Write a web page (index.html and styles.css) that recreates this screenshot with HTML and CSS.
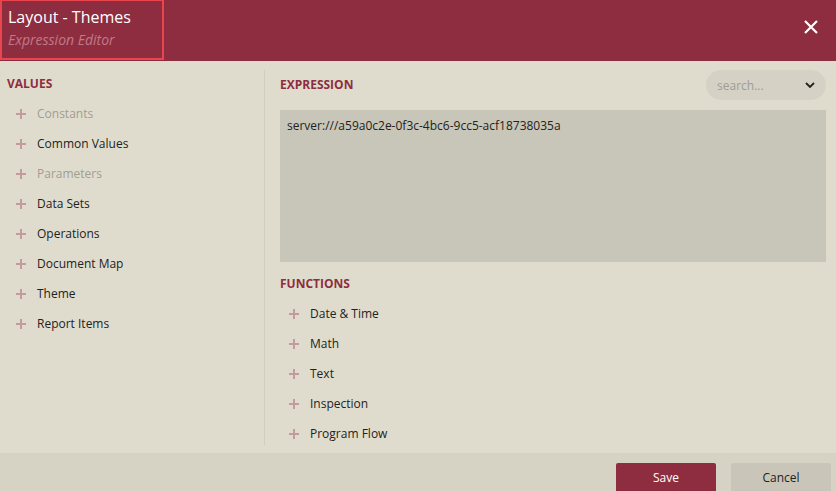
FILE: index.html
```html
<!DOCTYPE html>
<html lang="en">
<head>
    <meta charset="UTF-8">
    <title>Expression Editor</title>
    <link rel="stylesheet" href="styles.css">
</head>
<body>
    <div class="dialog">
        <div class="header">
            <div class="title-box">
                <div class="title">Layout - Themes</div>
                <div class="subtitle">Expression Editor</div>
            </div>
            <button class="close" aria-label="Close">
                <svg width="16" height="16" viewBox="0 0 16 16"><path d="M2 2 L14 14 M14 2 L2 14" stroke="#fff" stroke-width="2.2" fill="none"/></svg>
            </button>
        </div>
        <div class="content">
            <div class="sidebar">
                <h2>VALUES</h2>
                <ul class="tree">
                    <li class="disabled"><svg class="plus" viewBox="0 0 10 10"><path d="M5 0 V10 M0 5 H10"/></svg>Constants</li>
                    <li><svg class="plus" viewBox="0 0 10 10"><path d="M5 0 V10 M0 5 H10"/></svg>Common Values</li>
                    <li class="disabled"><svg class="plus" viewBox="0 0 10 10"><path d="M5 0 V10 M0 5 H10"/></svg>Parameters</li>
                    <li><svg class="plus" viewBox="0 0 10 10"><path d="M5 0 V10 M0 5 H10"/></svg>Data Sets</li>
                    <li><svg class="plus" viewBox="0 0 10 10"><path d="M5 0 V10 M0 5 H10"/></svg>Operations</li>
                    <li><svg class="plus" viewBox="0 0 10 10"><path d="M5 0 V10 M0 5 H10"/></svg>Document Map</li>
                    <li><svg class="plus" viewBox="0 0 10 10"><path d="M5 0 V10 M0 5 H10"/></svg>Theme</li>
                    <li><svg class="plus" viewBox="0 0 10 10"><path d="M5 0 V10 M0 5 H10"/></svg>Report Items</li>
                </ul>
            </div>
            <div class="main">
                <div class="main-head">
                    <h2>EXPRESSION</h2>
                    <div class="search">
                        <span class="placeholder">search...</span>
                        <svg width="10" height="6" viewBox="0 0 10 6"><path d="M1 1 L5 5 L9 1" stroke="#222" stroke-width="1.8" fill="none"/></svg>
                    </div>
                </div>
                <div class="expression">server:///a59a0c2e-0f3c-4bc6-9cc5-acf18738035a</div>
                <h2 class="functions-title">FUNCTIONS</h2>
                <ul class="tree">
                    <li><svg class="plus" viewBox="0 0 10 10"><path d="M5 0 V10 M0 5 H10"/></svg>Date &amp; Time</li>
                    <li><svg class="plus" viewBox="0 0 10 10"><path d="M5 0 V10 M0 5 H10"/></svg>Math</li>
                    <li><svg class="plus" viewBox="0 0 10 10"><path d="M5 0 V10 M0 5 H10"/></svg>Text</li>
                    <li><svg class="plus" viewBox="0 0 10 10"><path d="M5 0 V10 M0 5 H10"/></svg>Inspection</li>
                    <li><svg class="plus" viewBox="0 0 10 10"><path d="M5 0 V10 M0 5 H10"/></svg>Program Flow</li>
                </ul>
            </div>
        </div>
        <div class="footer">
            <button class="btn save">Save</button>
            <button class="btn cancel">Cancel</button>
        </div>
    </div>
</body>
</html>
```
FILE: styles.css
```css
body {
    margin: 0;
    font-family: 'Open Sans', 'Liberation Sans', sans-serif;
    background-color: #e0dccd;
    color: #222;
    font-size: 12px;
}
.dialog {
    width: 836px;
    height: 491px;
    display: flex;
    flex-direction: column;
    overflow: hidden;
}
.header {
    height: 61px;
    background-color: #8f2d40;
    display: flex;
    justify-content: space-between;
    align-items: flex-start;
    flex-shrink: 0;
}
.title-box {
    border: 2px solid #e8454f;
    border-top-width: 1px;
    padding: 0 0 0 6px;
    box-sizing: border-box;
    width: 164px;
    height: 60px;
}
.title {
    color: #fff;
    font-size: 16px;
    line-height: 20px;
    margin-top: 6px;
}
.subtitle {
    color: #c07a86;
    font-style: italic;
    font-size: 14px;
    line-height: 20px;
    margin-top: 3px;
}
.close {
    background: none;
    border: none;
    padding: 0;
    margin: 19px 17px 0 0;
    width: 16px;
    height: 16px;
    cursor: pointer;
}
.content {
    flex: 1;
    display: flex;
    padding-top: 9px;
}
h2 {
    margin: 0;
    font-size: 12px;
    font-weight: bold;
    color: #8f2d40;
    line-height: 16px;
}
.sidebar {
    width: 265px;
    box-sizing: border-box;
    padding: 6px 0 0 7px;
    border-right: 1px solid #d2cebf;
    margin-bottom: 8px;
}
.tree {
    list-style: none;
    margin: 0;
    padding: 0;
}
.tree li {
    height: 30px;
    line-height: 30px;
    display: flex;
    align-items: center;
    font-size: 12px;
    color: #222;
}
.tree li.disabled {
    color: #a19d92;
}
.plus {
    width: 10px;
    height: 10px;
    margin-left: 9px;
    margin-right: 11px;
    stroke: #c49b9c;
    stroke-width: 2;
    fill: none;
    flex-shrink: 0;
}
.sidebar .tree {
    margin-top: 7px;
}
.main {
    flex: 1;
    padding: 0 10px 0 15px;
}
.main-head {
    display: flex;
    justify-content: space-between;
    align-items: center;
    height: 30px;
}
.search {
    width: 120px;
    height: 30px;
    box-sizing: border-box;
    border-radius: 15px;
    background-color: #d5d2c5;
    display: flex;
    justify-content: space-between;
    align-items: center;
    padding: 0 11px 0 11px;
}
.placeholder {
    color: #a09c94;
    font-size: 12px;
}
.expression {
    margin-top: 10px;
    height: 152px;
    background-color: #c8c6b8;
    padding: 8px 7px;
    box-sizing: border-box;
    font-size: 12px;
    line-height: 16px;
}
.functions-title {
    margin-top: 14px;
}
.main .tree {
    margin-top: 7px;
}
.main .plus {
    margin-left: 9px;
    margin-right: 11px;
}
.footer {
    height: 38px;
    flex-shrink: 0;
    background-color: #d6d3c5;
    display: flex;
    justify-content: flex-end;
    align-items: flex-end;
    padding-right: 5px;
    gap: 15px;
}
.btn {
    width: 100px;
    height: 28px;
    border: none;
    border-radius: 2px 2px 0 0;
    font-family: 'Open Sans', 'Liberation Sans', sans-serif;
    font-size: 12px;
    cursor: pointer;
}
.save {
    background-color: #8f2d40;
    color: #fff;
}
.cancel {
    background-color: #c9c6b9;
    color: #222;
}
```
